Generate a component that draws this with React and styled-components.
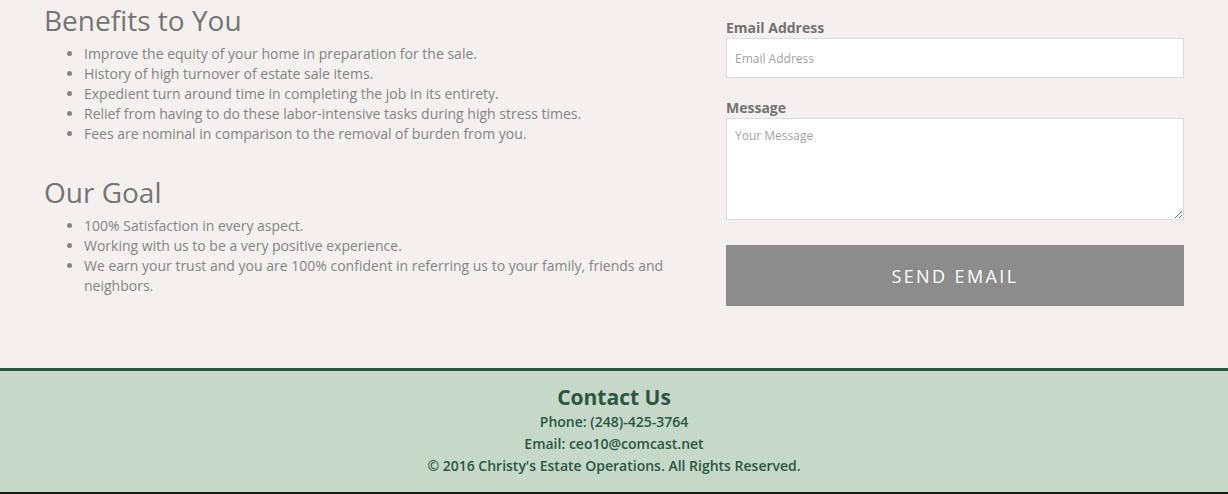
import React from "react";
import styled, { createGlobalStyle } from "styled-components";

const Global = createGlobalStyle`
  html, body { margin: 0; padding: 0; }
  body {
    background: #f4f0ef;
    font-family: "Open Sans", "Liberation Sans", sans-serif;
    width: 1228px;
    overflow: hidden;
  }
  * { box-sizing: border-box; }
`;

const Main = styled.section`
  display: grid;
  grid-template-columns: 640px 458px;
  column-gap: 42px;
  padding-left: 44px;
  height: 368px;
  background: #f4f0ef;
`;

const Column = styled.div`
  display: flex;
  flex-direction: column;
`;

const Heading = styled.h2`
  margin: ${(p) => (p.$first ? "0" : "28px")} 0 4px;
  font-size: 28px;
  font-weight: 400;
  line-height: 40px;
  color: #767473;
`;

const List = styled.ul`
  margin: 0;
  padding-left: 40px;
  width: 640px;
`;

const Item = styled.li`
  font-size: 14px;
  line-height: 20px;
  color: #858383;
  padding-right: 8px;
`;

const Label = styled.label`
  display: block;
  font-size: 14px;
  font-weight: 700;
  line-height: 20px;
  color: #747272;
  margin-top: ${(p) => p.$top}px;
`;

const Input = styled.input`
  display: block;
  width: 458px;
  height: 40px;
  border: 1px solid #dcdcdc;
  background: #fff;
  padding: 0 8px;
  font-family: inherit;
  font-size: 12px;
  color: #555;
  outline: none;
  &::placeholder { color: #a3a3a3; }
`;

const TextArea = styled.textarea`
  display: block;
  width: 458px;
  height: 102px;
  border: 1px solid #dcdcdc;
  background: #fff;
  padding: 8px 8px;
  font-family: inherit;
  font-size: 12px;
  color: #555;
  resize: vertical;
  outline: none;
  &::placeholder { color: #a3a3a3; }
`;

const Button = styled.button`
  margin-top: 25px;
  width: 458px;
  height: 61px;
  border: none;
  background: #8c8c8c;
  color: #fff;
  font-family: inherit;
  font-size: 18px;
  font-weight: 400;
  letter-spacing: 2.4px;
  cursor: pointer;
`;

const Footer = styled.footer`
  border-top: 3px solid #2c5542;
  border-bottom: 2px solid #1a1a1a;
  background: #c5d8ca;
  padding: 13px 0 15px;
  text-align: center;
  color: #2c5542;
`;

const FooterTitle = styled.h3`
  margin: 0;
  font-size: 21px;
  font-weight: 700;
  line-height: 27px;
`;

const FooterLine = styled.p`
  margin: 0;
  font-size: 14px;
  font-weight: 600;
  line-height: 22px;
`;

const benefits = [
  "Improve the equity of your home in preparation for the sale.",
  "History of high turnover of estate sale items.",
  "Expedient turn around time in completing the job in its entirety.",
  "Relief from having to do these labor-intensive tasks during high stress times.",
  "Fees are nominal in comparison to the removal of burden from you.",
];

const goals = [
  "100% Satisfaction in every aspect.",
  "Working with us to be a very positive experience.",
  "We earn your trust and you are 100% confident in referring us to your family, friends and neighbors.",
];

export default function App() {
  return (
    <>
      <Global />
      <Main>
        <Column>
          <Heading $first>Benefits to You</Heading>
          <List>
            {benefits.map((b) => (
              <Item key={b}>{b}</Item>
            ))}
          </List>
          <Heading>Our Goal</Heading>
          <List>
            {goals.map((g) => (
              <Item key={g}>{g}</Item>
            ))}
          </List>
        </Column>
        <Column>
          <Label $top={18}>Email Address</Label>
          <Input type="email" placeholder="Email Address" />
          <Label $top={20}>Message</Label>
          <TextArea placeholder="Your Message" />
          <Button type="button">SEND EMAIL</Button>
        </Column>
      </Main>
      <Footer>
        <FooterTitle>Contact Us</FooterTitle>
        <FooterLine>Phone: (248)-425-3764</FooterLine>
        <FooterLine>Email: ceo10@comcast.net</FooterLine>
        <FooterLine>© 2016 Christy's Estate Operations. All Rights Reserved.</FooterLine>
      </Footer>
    </>
  );
}
